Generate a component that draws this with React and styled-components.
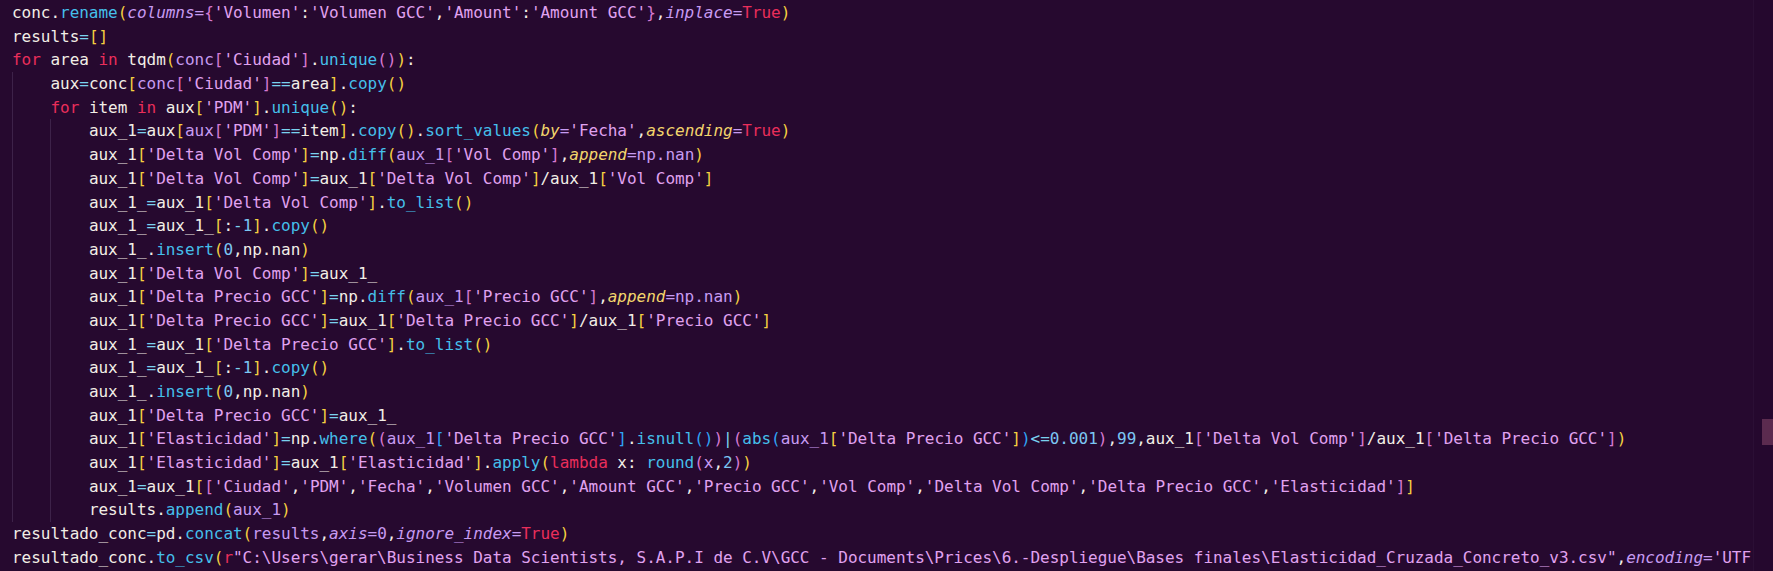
import styled, { createGlobalStyle } from 'styled-components';

const C = {
    bg: '#26092f',
    plain: '#f2eee6',
    func: '#45bfea',
    str: '#e0a2f0',
    kw: '#ea2e5b',
    lav: '#c79bf2',
    gold: '#f3d56c',
    op: '#7ad2ee',
    num: '#7cc6f3',
    guide: '#3d2249',
};
const BRACKETS = ['#f5d040', '#d679d2', '#2fa4f5'];
const KEYWORDS = new Set(['for', 'in', 'lambda', 'True']);
const GOLD_ARGS = new Set(['by', 'ascending', 'append']);
const PLAIN_CALLS = new Set(['tqdm']);

const LINES = [
    [0, "conc.rename(columns={'Volumen':'Volumen GCC','Amount':'Amount GCC'},inplace=True)"],
    [0, "results=[]"],
    [0, "for area in tqdm(conc['Ciudad'].unique()):"],
    [1, "aux=conc[conc['Ciudad']==area].copy()"],
    [1, "for item in aux['PDM'].unique():"],
    [2, "aux_1=aux[aux['PDM']==item].copy().sort_values(by='Fecha',ascending=True)"],
    [2, "aux_1['Delta Vol Comp']=np.diff(aux_1['Vol Comp'],append=np.nan)"],
    [2, "aux_1['Delta Vol Comp']=aux_1['Delta Vol Comp']/aux_1['Vol Comp']"],
    [2, "aux_1_=aux_1['Delta Vol Comp'].to_list()"],
    [2, "aux_1_=aux_1_[:-1].copy()"],
    [2, "aux_1_.insert(0,np.nan)"],
    [2, "aux_1['Delta Vol Comp']=aux_1_"],
    [2, "aux_1['Delta Precio GCC']=np.diff(aux_1['Precio GCC'],append=np.nan)"],
    [2, "aux_1['Delta Precio GCC']=aux_1['Delta Precio GCC']/aux_1['Precio GCC']"],
    [2, "aux_1_=aux_1['Delta Precio GCC'].to_list()"],
    [2, "aux_1_=aux_1_[:-1].copy()"],
    [2, "aux_1_.insert(0,np.nan)"],
    [2, "aux_1['Delta Precio GCC']=aux_1_"],
    [2, "aux_1['Elasticidad']=np.where((aux_1['Delta Precio GCC'].isnull())|(abs(aux_1['Delta Precio GCC'])<=0.001),99,aux_1['Delta Vol Comp']/aux_1['Delta Precio GCC'])"],
    [2, "aux_1['Elasticidad']=aux_1['Elasticidad'].apply(lambda x: round(x,2))"],
    [2, "aux_1=aux_1[['Ciudad','PDM','Fecha','Volumen GCC','Amount GCC','Precio GCC','Vol Comp','Delta Vol Comp','Delta Precio GCC','Elasticidad']]"],
    [2, "results.append(aux_1)"],
    [0, "resultado_conc=pd.concat(results,axis=0,ignore_index=True)"],
    // the editor viewport ends right after 'UTF
    [0, String.raw`resultado_conc.to_csv(r"C:\Users\gerar\Business Data Scientists, S.A.P.I de C.V\GCC - Documents\Prices\6.-Despliegue\Bases finales\Elasticidad_Cruzada_Concreto_v3.csv",encoding='UTF`],
];

// rough python highlighter, good enough for this snippet
function tokenize(src) {
    const out = [];
    let i = 0;
    let depth = 0;
    let afterKwarg = false;
    let prev = '';
    const push = (text, color, italic) => out.push({ text, color, italic });

    while (i < src.length) {
        const ch = src[i];

        if (ch === ' ') {
            push(' ', C.plain);
            i++;
            continue;
        }

        if (ch === "'" || ch === '"' || (ch === 'r' && src[i + 1] === '"')) {
            if (ch === 'r') {
                push('r', C.kw);
                i++;
            }
            const q = src[i];
            let j = src.indexOf(q, i + 1);
            if (j < 0) j = src.length - 1;
            push(src.slice(i, j + 1), C.str);
            i = j + 1;
            prev = 'str';
            continue;
        }

        if (/[A-Za-z_]/.test(ch)) {
            let j = i;
            while (j < src.length && /\w/.test(src[j])) j++;
            const word = src.slice(i, j);
            const next = src[j];
            if (KEYWORDS.has(word)) push(word, C.kw);
            else if (next === '(') push(word, PLAIN_CALLS.has(word) ? C.plain : C.func);
            else if (next === '=' && src[j + 1] !== '=' && depth > 0) {
                push(word, GOLD_ARGS.has(word) ? C.gold : C.lav, true);
                push('=', C.lav);
                j++;
                afterKwarg = true;
            } else if (afterKwarg || prev === '(') push(word, C.lav);
            else push(word, C.plain);
            prev = 'id';
            i = j;
            continue;
        }

        if (/[0-9]/.test(ch)) {
            let j = i;
            while (j < src.length && /[0-9.]/.test(src[j])) j++;
            push(src.slice(i, j), afterKwarg ? C.lav : C.num);
            i = j;
            prev = 'num';
            continue;
        }

        if ('([{'.includes(ch)) {
            push(ch, BRACKETS[depth % 3]);
            depth++;
            afterKwarg = false;
            prev = '(';
            i++;
            continue;
        }
        if (')]}'.includes(ch)) {
            depth = Math.max(0, depth - 1);
            push(ch, BRACKETS[depth % 3]);
            afterKwarg = false;
            prev = ')';
            i++;
            continue;
        }

        if ('=<>|-'.includes(ch)) {
            let j = i;
            while (j < src.length && '=<>|-'.includes(src[j])) j++;
            push(src.slice(i, j), C.op);
            i = j;
            prev = 'op';
            continue;
        }

        if (ch === ',') afterKwarg = false;
        push(ch, afterKwarg ? C.lav : C.plain);
        prev = ch;
        i++;
    }
    return out;
}

export default function App() {
    return (
        <>
            <Global />
            <Editor>
                <Code>
                    {LINES.map(([indent, src], n) => (
                        <Line key={n}>
                            {Array.from({ length: indent }).map((_, k) => (
                                <Indent key={k} />
                            ))}
                            {tokenize(src).map((t, k) => (
                                <Token key={k} $color={t.color} $italic={t.italic}>
                                    {t.text}
                                </Token>
                            ))}
                        </Line>
                    ))}
                </Code>
                <Ruler>
                    <RulerMark />
                </Ruler>
            </Editor>
        </>
    );
}

const Global = createGlobalStyle`
    html, body{
        margin: 0;
        padding: 0;
        background: ${C.bg};
    }
`;

const Editor = styled.div`
    display: flex;
    width: 100vw;
    height: 571px;
    background: ${C.bg};
    overflow: hidden;
`;

const Code = styled.div`
    flex: 1;
    min-width: 0;
    overflow: hidden;
    padding: 1px 0 0 12px;
    font-family: "DejaVu Sans Mono", "Liberation Mono", monospace;
    font-size: 16px;
    letter-spacing: -0.025px;
    line-height: 23.7px;
    color: ${C.plain};
`;

const Line = styled.div`
    height: 23.7px;
    white-space: pre;
`;

const Indent = styled.span`
    display: inline-block;
    width: 38.45px;
    height: 23.7px;
    vertical-align: top;
    box-shadow: inset 1px 0 0 ${C.guide};
`;

const Token = styled.span`
    color: ${(p) => p.$color};
    font-style: ${(p) => (p.$italic ? 'italic' : 'normal')};
`;

const Ruler = styled.div`
    width: 20px;
    flex-shrink: 0;
    padding-top: 419px;
    box-sizing: border-box;
    background: #25082e;
    box-shadow: inset 1px 0 0 #2b0f35;
    display: flex;
    flex-direction: column;
    align-items: flex-end;
`;

const RulerMark = styled.div`
    width: 11px;
    height: 26px;
    background: #5b2b4f;
`;
